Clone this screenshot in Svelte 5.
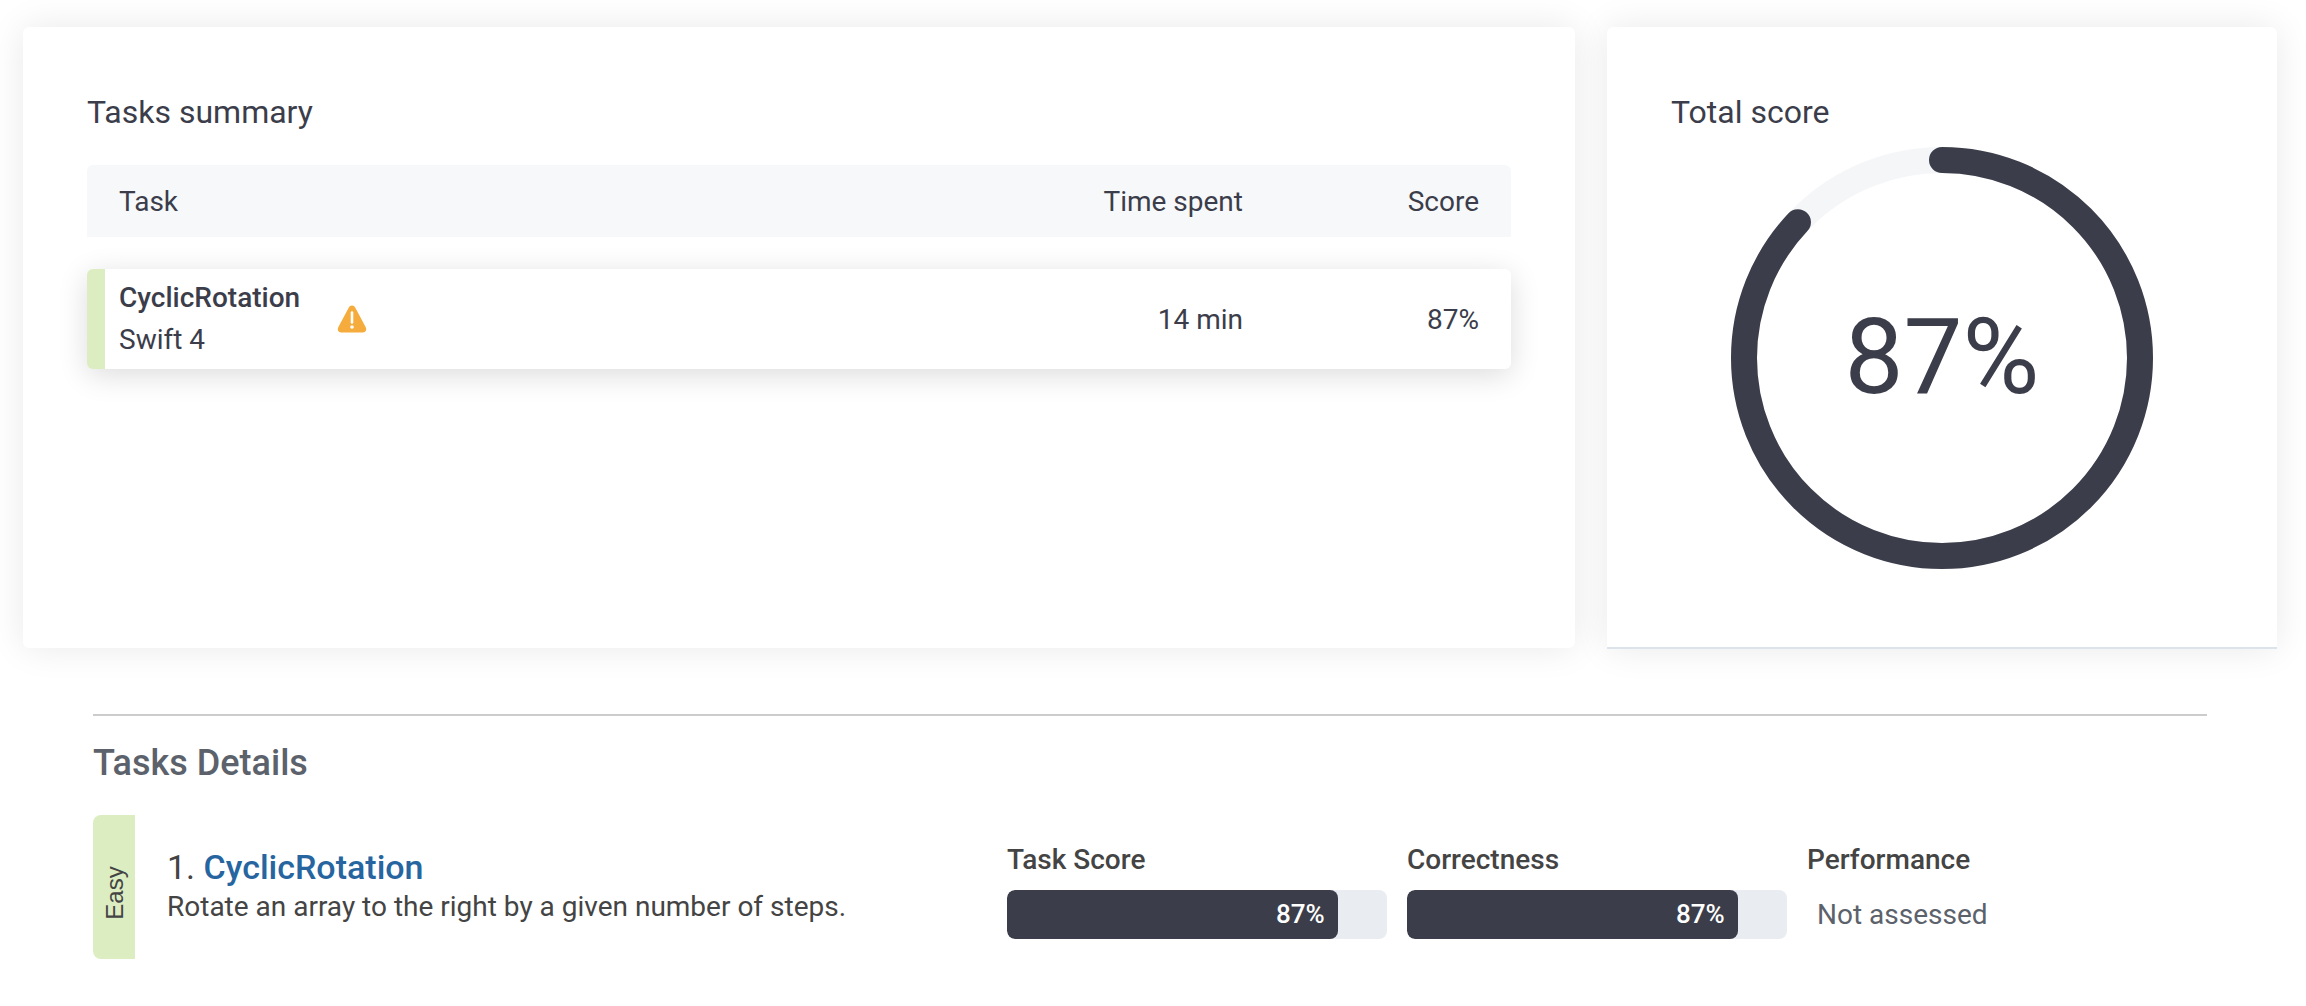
<script>
	const score = 87
	const radius = 198
	const circumference = 2 * Math.PI * radius
	const dash = (score / 100) * circumference

	const bars = [
		{ label: 'Task Score', value: score },
		{ label: 'Correctness', value: score }
	]
</script>

<div class="page">
	<div class="top">
		<section class="card summary">
			<h2>Tasks summary</h2>
			<div class="table-head">
				<span class="col-task">Task</span>
				<span class="col-time">Time spent</span>
				<span class="col-score">Score</span>
			</div>
			<div class="task-row">
				<div class="col-task task-name">
					<div>
						<div class="name">CyclicRotation</div>
						<div>Swift 4</div>
					</div>
					<svg class="warn" viewBox="0 0 30 28" width="30" height="28">
						<path d="M15 .5c1.400 0 2.500.8 3.300 2.200l10.300 19.300c1.500 2.800.2 5.500-3 5.500H4.400c-3.200 0-4.500-2.700-3-5.500L11.700 2.700C12.500 1.300 13.600.5 15 .5z" fill="#f5ac3c"/>
						<path d="M15 7.500v10" stroke="#fff" stroke-width="2.600" stroke-linecap="round"/>
						<circle cx="15" cy="22" r="1.800" fill="#fff"/>
					</svg>
				</div>
				<span class="col-time">14 min</span>
				<span class="col-score">{score}%</span>
			</div>
		</section>

		<section class="card total">
			<h2>Total score</h2>
			<div class="ring">
				<svg viewBox="0 0 422 422" width="422" height="422">
					<circle cx="211" cy="211" r={radius} fill="none" stroke="#f5f6f8" stroke-width="26"/>
					<circle
						cx="211" cy="211" r={radius}
						fill="none" stroke="#3b3d4a" stroke-width="26" stroke-linecap="round"
						stroke-dasharray="{dash} {circumference}"
						transform="rotate(-90 211 211)"
					/>
				</svg>
				<span class="ring-value">{score}%</span>
			</div>
		</section>
	</div>

	<div class="details">
		<h3>Tasks Details</h3>
		<div class="detail-row">
			<div class="level"><span>Easy</span></div>
			<div class="detail-info">
				<div class="detail-title">1. <span class="link">CyclicRotation</span></div>
				<div class="detail-desc">Rotate an array to the right by a given number of steps.</div>
			</div>
			<div class="metrics">
				{#each bars as bar}
					<div class="metric">
						<div class="metric-label">{bar.label}</div>
						<div class="bar">
							<div class="bar-fill" style="width: {bar.value}%">{bar.value}%</div>
						</div>
					</div>
				{/each}
				<div class="metric">
					<div class="metric-label">Performance</div>
					<div class="not-assessed">Not assessed</div>
				</div>
			</div>
		</div>
	</div>
</div>

<style>
	:global(body) {
		background: #fff;
		font-family: Roboto, sans-serif;
	}

	.page {
		width: 2306px;
		height: 1006px;
		overflow: hidden;
		color: #3b3d4a;
	}

	.top {
		display: flex;
		gap: 32px;
		align-items: flex-start;
		padding: 27px 29px 0 23px;
	}

	.card {
		background: #fff;
		border-radius: 6px;
		box-shadow: 0 0 36px rgba(0, 0, 0, 0.09);
		box-sizing: border-box;
		height: 621px;
		padding: 0 64px;
	}

	.summary {
		width: 1552px;
	}

	.total {
		width: 670px;
		height: 622px;
		border-bottom: 2px solid #dde3ea;
		border-radius: 6px 6px 0 0;
	}

	h2 {
		font-size: 32px;
		font-weight: 400;
		line-height: 40px;
		margin: 65px 0 0;
	}

	.table-head {
		align-items: center;
		background: #f7f8fa;
		border-radius: 6px 6px 0 0;
		display: flex;
		font-size: 28px;
		height: 72px;
		margin-top: 33px;
		padding: 0 32px;
	}

	.task-row {
		align-items: center;
		background: #fff;
		border-left: 18px solid #dcedc2;
		border-radius: 6px;
		box-shadow: 0 6px 30px rgba(0, 0, 0, 0.14);
		box-sizing: border-box;
		display: flex;
		font-size: 28px;
		height: 100px;
		margin-top: 32px;
		padding: 0 32px 0 14px;
	}

	.col-task {
		flex: 1;
	}

	.col-time {
		text-align: right;
		width: 300px;
	}

	.col-score {
		text-align: right;
		width: 236px;
	}

	.task-name {
		align-items: center;
		display: flex;
		gap: 36px;
		line-height: 42px;
	}

	.name {
		font-weight: 500;
	}

	.warn {
		display: block;
		transform: translateX(1px);
	}

	.ring {
		margin: 15px 0 0 60px;
		position: relative;
		width: 422px;
		height: 422px;
	}

	.ring svg {
		display: block;
	}

	.ring-value {
		font-size: 105px;
		left: 0;
		line-height: 422px;
		position: absolute;
		right: 0;
		text-align: center;
		top: 0;
	}

	.details {
		border-top: 2px solid #cccccc;
		margin: 65px 99px 0 93px;
	}

	h3 {
		color: #5c626b;
		font-size: 36px;
		font-weight: 500;
		line-height: 40px;
		margin: 27px 0 0;
	}

	.detail-row {
		display: flex;
		margin-top: 32px;
	}

	.level {
		align-items: center;
		background: #dcedc2;
		border-radius: 8px 0 0 8px;
		display: flex;
		height: 144px;
		justify-content: center;
		width: 42px;
	}

	.level span {
		color: #444;
		font-family: "Liberation Sans", sans-serif;
		font-size: 24px;
		transform: rotate(-90deg) translate(-6px, 1px);
	}

	.detail-info {
		color: #444;
		margin-left: 32px;
		width: 840px;
	}

	.detail-title {
		font-size: 34px;
		line-height: 40px;
		margin-top: 32px;
	}

	.link {
		color: #26659f;
		font-weight: 500;
	}

	.detail-desc {
		font-size: 28px;
		line-height: 40px;
	}

	.metrics {
		display: flex;
		gap: 20px;
		margin-top: 27px;
	}

	.metric {
		width: 380px;
	}

	.metric-label {
		color: #444;
		font-size: 28px;
		font-weight: 500;
		line-height: 36px;
	}

	.bar {
		background: #e9edf2;
		border-radius: 8px;
		height: 49px;
		margin-top: 12px;
		overflow: hidden;
	}

	.bar-fill {
		background: #3b3d4a;
		border-radius: 8px;
		box-sizing: border-box;
		color: #fff;
		font-size: 26px;
		font-weight: 500;
		height: 100%;
		line-height: 49px;
		padding-right: 13px;
		text-align: right;
	}

	.not-assessed {
		color: #5c626b;
		font-size: 28px;
		line-height: 49px;
		margin: 12px 0 0 10px;
	}
</style>
